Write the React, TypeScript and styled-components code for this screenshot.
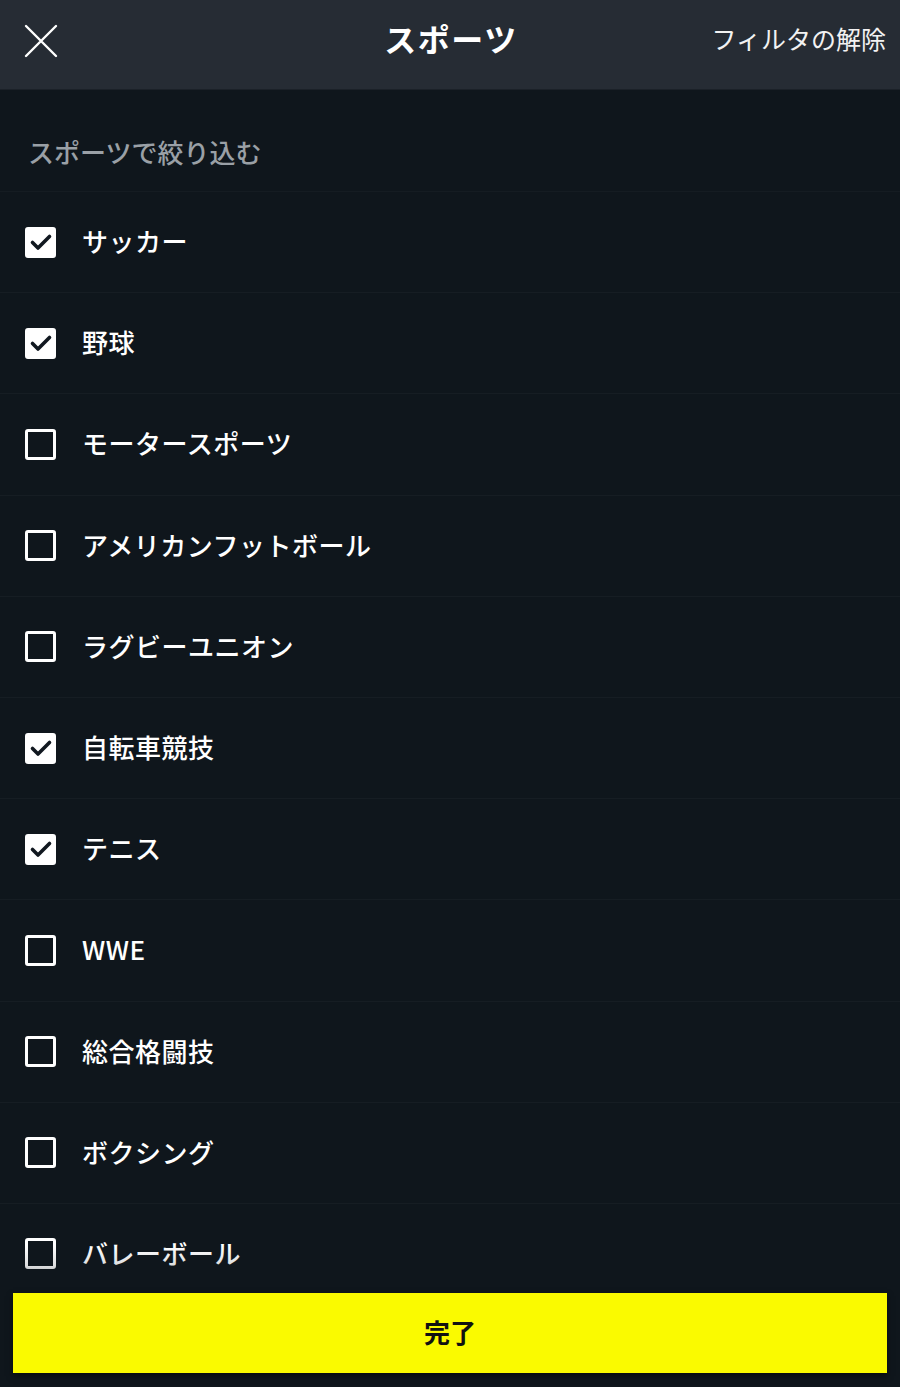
import React from "react";
import styled, { createGlobalStyle } from "styled-components";

const GlobalStyle = createGlobalStyle`
  html, body { margin: 0; padding: 0; background: #0f161c; }
  body { font-family: "Noto Sans CJK JP", "Noto Sans", sans-serif; }
  * { box-sizing: border-box; }
`;

const Screen = styled.div`
  position: relative;
  width: 900px;
  height: 1387px;
  overflow: hidden;
  background: #0f161c;
  color: #fff;
`;

const Header = styled.header`
  height: 90px;
  background: #262c34;
  display: grid;
  grid-template-columns: 1fr auto 1fr;
  align-items: center;
  padding: 0 14px 14px 22px;
  border-bottom: 1px solid #1b2128;
`;

const CloseButton = styled.button`
  justify-self: start;
  background: none;
  border: none;
  padding: 0;
  width: 38px;
  height: 38px;
  margin-top: 6px;
  display: flex;
  align-items: center;
  justify-content: center;
  cursor: pointer;
`;

const Title = styled.h1`
  margin: 0 0 0 -6px;
  font-size: 32px;
  font-weight: 700;
  letter-spacing: 1.5px;
`;

const ClearLink = styled.span`
  justify-self: end;
  font-size: 25px;
  font-weight: 400;
  color: #f2f2f2;
`;

const SectionLabel = styled.div`
  height: 102px;
  display: flex;
  align-items: flex-end;
  padding: 0 0 21px 28px;
  font-size: 26px;
  font-weight: 500;
  color: #9aa0a6;
  border-bottom: 1px solid #151c22;
`;

const List = styled.ul`
  list-style: none;
  margin: 0;
  padding: 0;
`;

const Row = styled.li`
  height: 101.2px;
  display: flex;
  align-items: center;
  gap: 26px;
  padding-left: 25px;
  border-bottom: 1px solid #161d23;
`;

const Box = styled.span<{ $checked: boolean }>`
  width: 31px;
  height: 31px;
  border-radius: 3px;
  border: 3px solid #fff;
  background: ${(p) => (p.$checked ? "#fff" : "transparent")};
  display: flex;
  align-items: center;
  justify-content: center;
  flex-shrink: 0;
`;

const Label = styled.span`
  font-size: 26px;
  font-weight: 500;
  color: #fff;
  letter-spacing: 0.5px;
  margin-top: -3px;
`;

const Fade = styled.div`
  position: absolute;
  left: 0;
  right: 0;
  bottom: 0;
  height: 142px;
  background: linear-gradient(
    to bottom,
    rgba(15, 22, 28, 0) 0%,
    rgba(15, 22, 28, 0.15) 15%,
    rgba(15, 22, 28, 0.55) 28%,
    #0f161c 38%
  );
  pointer-events: none;
`;

const DoneButton = styled.button`
  position: absolute;
  left: 13px;
  right: 13px;
  bottom: 14px;
  height: 80px;
  background: #fafa00;
  border: none;
  border-radius: 0;
  font-family: "Noto Sans CJK JP", "Noto Sans", sans-serif;
  font-size: 26px;
  font-weight: 700;
  color: #111;
  padding-bottom: 4px;
  box-shadow: 0 3px 6px rgba(0, 0, 0, 0.5);
  cursor: pointer;
`;

const sports: { name: string; checked: boolean }[] = [
  { name: "サッカー", checked: true },
  { name: "野球", checked: true },
  { name: "モータースポーツ", checked: false },
  { name: "アメリカンフットボール", checked: false },
  { name: "ラグビーユニオン", checked: false },
  { name: "自転車競技", checked: true },
  { name: "テニス", checked: true },
  { name: "WWE", checked: false },
  { name: "総合格闘技", checked: false },
  { name: "ボクシング", checked: false },
  { name: "バレーボール", checked: false },
  { name: "ゴルフ", checked: false },
];

const Check = () => (
  <svg width="24" height="24" viewBox="0 0 24 24" fill="none">
    <path d="M3.5 12.5l5.5 5.5L20.5 6.5" stroke="#111820" strokeWidth="3.6" strokeLinecap="round" strokeLinejoin="round" />
  </svg>
);

export default function App() {
  return (
    <>
      <GlobalStyle />
      <Screen>
        <Header>
          <CloseButton aria-label="閉じる">
            <svg width="36" height="36" viewBox="0 0 36 36">
              <path d="M3 3L33 33M33 3L3 33" stroke="#fff" strokeWidth="2.4" strokeLinecap="round" />
            </svg>
          </CloseButton>
          <Title>スポーツ</Title>
          <ClearLink>フィルタの解除</ClearLink>
        </Header>
        <SectionLabel>スポーツで絞り込む</SectionLabel>
        <List>
          {sports.map((s) => (
            <Row key={s.name}>
              <Box $checked={s.checked}>{s.checked && <Check />}</Box>
              <Label>{s.name}</Label>
            </Row>
          ))}
        </List>
        <Fade />
        <DoneButton>完了</DoneButton>
      </Screen>
    </>
  );
}
